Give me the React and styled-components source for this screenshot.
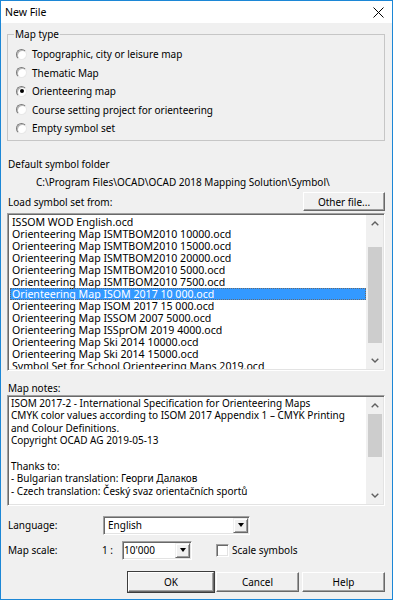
import React from "react";
import styled, { createGlobalStyle } from "styled-components";

const GlobalStyle = createGlobalStyle`
  html, body { margin: 0; padding: 0; background: #fff; }
  body {
    font-family: "Noto Sans", "Open Sans", sans-serif;
    font-size: 10px;
    color: #000;
  }
  * { box-sizing: border-box; }
`;

const Window = styled.div`
  width: 393px;
  height: 600px;
  border: 1px solid #1c87d6;
  display: flex;
  flex-direction: column;
  background: #f0f0f0;
`;

const TitleBar = styled.div`
  height: 22px;
  flex-shrink: 0;
  background: #fff;
  display: flex;
  align-items: center;
  justify-content: space-between;
  padding: 0 8px 0 4px;
`;

const Title = styled.span`
  font-size: 10.5px;
`;

const Body = styled.div`
  flex: 1;
  display: flex;
  flex-direction: column;
  padding: 4px 7px 0 6px;
`;

const Group = styled.fieldset`
  margin: 0;
  min-width: 0;
  padding: 3.75px 8px 2px 8px;
  border: 1px solid #c6c6c6;
  border-radius: 0;
`;

const Legend = styled.legend`
  padding: 0 1px;
  margin-left: -2px;
  line-height: 14px;
`;

const RadioRow = styled.label`
  display: flex;
  align-items: center;
  height: 18.6px;
  gap: 5px;
`;

const Radio = styled.span`
  width: 11px;
  height: 11px;
  border-radius: 50%;
  border: 1px solid;
  border-color: #7a7a7a #e8e8e8 #e8e8e8 #7a7a7a;
  background: #fff;
  box-shadow: inset 1px 1px 0 #b8b8b8;
  display: flex;
  align-items: center;
  justify-content: center;
  &::after {
    content: "";
    width: 4px;
    height: 4px;
    border-radius: 50%;
    background: ${(p) => (p.$checked ? "#000" : "transparent")};
  }
`;

const TextLine = styled.div`
  height: ${(p) => p.$h || 18}px;
  line-height: ${(p) => p.$h || 18}px;
  padding-left: ${(p) => p.$indent || 1}px;
  margin-top: ${(p) => p.$mt || 0}px;
  white-space: nowrap;
`;

const LoadRow = styled.div`
  height: 22px;
  display: flex;
  align-items: center;
  justify-content: space-between;
  padding-left: 1px;
`;

const Button = styled.button`
  font: inherit;
  color: #000;
  width: ${(p) => p.$w || 83}px;
  height: ${(p) => p.$h || 20}px;
  margin-left: ${(p) => p.$ml || 0}px;
  padding: 0;
  background: #f0f0f0;
  border: 1px solid;
  border-color: #fff #696969 #696969 #fff;
  box-shadow: ${(p) =>
    p.$default
      ? "inset -1px -1px 0 #a0a0a0, 0 0 0 1px #3c3c3c"
      : "inset -1px -1px 0 #a0a0a0"};
  display: flex;
  align-items: center;
  justify-content: center;
`;

const Sunken = styled.div`
  border: 1px solid;
  border-color: #a0a0a0 #fff #fff #a0a0a0;
  padding: 1px;
  box-shadow: inset 1px 1px 0 #696969, inset -1px -1px 0 #e3e3e3;
  background: #fff;
  display: flex;
`;

const ListBox = styled(Sunken)`
  height: 158px;
`;

const NotesBox = styled(Sunken)`
  height: 111px;
`;

const Rows = styled.div`
  flex: 1;
  min-width: 0;
  padding: 1px 0 0 1px;
  overflow: hidden;
  background: #fff;
  font-size: 10.6px;
`;

const Row = styled.div`
  height: 12px;
  line-height: 12px;
  padding-left: 2px;
  white-space: nowrap;
  background: ${(p) => (p.$selected ? "#3399ff" : "transparent")};
  color: ${(p) => (p.$selected ? "#fff" : "#000")};
  outline: ${(p) => (p.$selected ? "1px dotted #6a6a6a" : "none")};
  outline-offset: -1px;
`;

const NoteText = styled.div`
  flex: 1;
  min-width: 0;
  padding: 0 0 0 2px;
  overflow: hidden;
  background: #fff;
`;

const NoteLine = styled.div`
  height: 12.57px;
  line-height: 12.57px;
  white-space: nowrap;
`;

const ScrollBar = styled.div`
  width: 17px;
  flex-shrink: 0;
  background: #f0f0f0;
  display: flex;
  flex-direction: column;
`;

const ScrollArrow = styled.div`
  height: 17px;
  flex-shrink: 0;
  display: flex;
  align-items: center;
  justify-content: center;
`;

const Track = styled.div`
  flex: 1;
  display: flex;
  flex-direction: column;
  padding: ${(p) => p.$offset}px 1px 0 2px;
`;

const Thumb = styled.div`
  height: ${(p) => p.$size}px;
  background: #cdcdcd;
`;

const FormRow = styled.div`
  display: flex;
  align-items: center;
  height: 19px;
  margin-top: ${(p) => p.$mt || 0}px;
`;

const FormLabel = styled.span`
  width: ${(p) => p.$w}px;
  padding-left: 1px;
  flex-shrink: 0;
`;

const Combo = styled(Sunken)`
  width: ${(p) => p.$w}px;
  height: 19px;
  padding: 1px;
  align-items: stretch;
`;

const ComboText = styled.span`
  flex: 1;
  padding-left: ${(p) => p.$pad}px;
  line-height: 15px;
  white-space: nowrap;
`;

const DropButton = styled.span`
  width: 15px;
  flex-shrink: 0;
  background: #f0f0f0;
  border: 1px solid;
  border-color: #f0f0f0 #696969 #696969 #f0f0f0;
  box-shadow: inset 1px 1px 0 #fff, inset -1px -1px 0 #a0a0a0;
  display: flex;
  align-items: center;
  justify-content: center;
  &::after {
    content: "";
    border-left: 3.5px solid transparent;
    border-right: 3.5px solid transparent;
    border-top: 4px solid #000;
  }
`;

const Prefix = styled.span`
  width: 20px;
  flex-shrink: 0;
`;

const CheckBox = styled.span`
  width: 13px;
  height: 13px;
  margin-left: 24px;
  margin-right: 3px;
  background: #fff;
  border: 1px solid;
  border-color: #a0a0a0 #fff #fff #a0a0a0;
  box-shadow: inset 1px 1px 0 #696969, inset -1px -1px 0 #e3e3e3;
`;

const ButtonRow = styled.div`
  display: flex;
  justify-content: flex-end;
  margin-top: 12px;
  gap: 2px;
`;

const Chevron = ({ up }) => (
  <svg width="8" height="5" viewBox="0 0 8 5">
    <path
      d={up ? "M0.7 4.3 L4 1 L7.3 4.3" : "M0.7 0.7 L4 4 L7.3 0.7"}
      fill="none"
      stroke="#606060"
      strokeWidth="1.4"
    />
  </svg>
);

const CloseIcon = () => (
  <svg width="11" height="11" viewBox="0 0 11 11">
    <path d="M0.5 0.5 L10.5 10.5 M10.5 0.5 L0.5 10.5" stroke="#000" strokeWidth="1" />
  </svg>
);

const VScroll = ({ offset, size }) => (
  <ScrollBar>
    <ScrollArrow>
      <Chevron up />
    </ScrollArrow>
    <Track $offset={offset}>
      <Thumb $size={size} />
    </Track>
    <ScrollArrow>
      <Chevron />
    </ScrollArrow>
  </ScrollBar>
);

const mapTypes = [
  "Topographic, city or leisure map",
  "Thematic Map",
  "Orienteering map",
  "Course setting project for orienteering",
  "Empty symbol set",
];

const symbolSets = [
  "ISSOM WOD English.ocd",
  "Orienteering Map ISMTBOM2010 10000.ocd",
  "Orienteering Map ISMTBOM2010 15000.ocd",
  "Orienteering Map ISMTBOM2010 20000.ocd",
  "Orienteering Map ISMTBOM2010 5000.ocd",
  "Orienteering Map ISMTBOM2010 7500.ocd",
  "Orienteering Map ISOM 2017 10 000.ocd",
  "Orienteering Map ISOM 2017 15 000.ocd",
  "Orienteering Map ISSOM 2007 5000.ocd",
  "Orienteering Map ISSprOM 2019 4000.ocd",
  "Orienteering Map Ski 2014 10000.ocd",
  "Orienteering Map Ski 2014 15000.ocd",
  "Symbol Set for School Orienteering Maps 2019.ocd",
];

const notes = [
  "ISOM 2017-2 - International Specification for Orienteering Maps",
  "CMYK color values according to ISOM 2017 Appendix 1 – CMYK Printing",
  "and Colour Definitions.",
  "Copyright OCAD AG 2019-05-13",
  "",
  "Thanks to:",
  "- Bulgarian translation: Георги Далаков",
  "- Czech translation: Český svaz orientačních sportů",
];

export default function App() {
  return (
    <>
      <GlobalStyle />
      <Window>
        <TitleBar>
          <Title>New File</Title>
          <CloseIcon />
        </TitleBar>
        <Body>
          <Group>
            <Legend>Map type</Legend>
            {mapTypes.map((t, i) => (
              <RadioRow key={t}>
                <Radio $checked={i === 2} />
                <span>{t}</span>
              </RadioRow>
            ))}
          </Group>

          <TextLine $mt={14}>Default symbol folder</TextLine>
          <TextLine $indent={29}>
            C:\Program Files\OCAD\OCAD 2018 Mapping Solution\Symbol\
          </TextLine>
          <LoadRow>
            <span>Load symbol set from:</span>
            <Button $w={82} $h={19}>Other file...</Button>
          </LoadRow>

          <ListBox>
            <Rows>
              {symbolSets.map((s, i) => (
                <Row key={s} $selected={i === 6}>
                  {s}
                </Row>
              ))}
            </Rows>
            <VScroll offset={15} size={96} />
          </ListBox>

          <TextLine $mt={10} $h={14}>Map notes:</TextLine>
          <NotesBox>
            <NoteText>
              {notes.map((n, i) => (
                <NoteLine key={i}>{n || "\u00a0"}</NoteLine>
              ))}
            </NoteText>
            <VScroll offset={0} size={43} />
          </NotesBox>

          <FormRow $mt={10}>
            <FormLabel $w={96}>Language:</FormLabel>
            <Combo $w={147}>
              <ComboText $pad={3}>English</ComboText>
              <DropButton />
            </Combo>
          </FormRow>
          <FormRow $mt={6}>
            <FormLabel $w={95}>Map scale:</FormLabel>
            <Prefix>1 :</Prefix>
            <Combo $w={70}>
              <ComboText $pad={0}>10'000</ComboText>
              <DropButton />
            </Combo>
            <CheckBox />
            <span>Scale symbols</span>
          </FormRow>

          <ButtonRow>
            <Button $w={86} $default>OK</Button>
            <Button $w={83}>Cancel</Button>
            <Button $w={83} $ml={1}>Help</Button>
          </ButtonRow>
        </Body>
      </Window>
    </>
  );
}
